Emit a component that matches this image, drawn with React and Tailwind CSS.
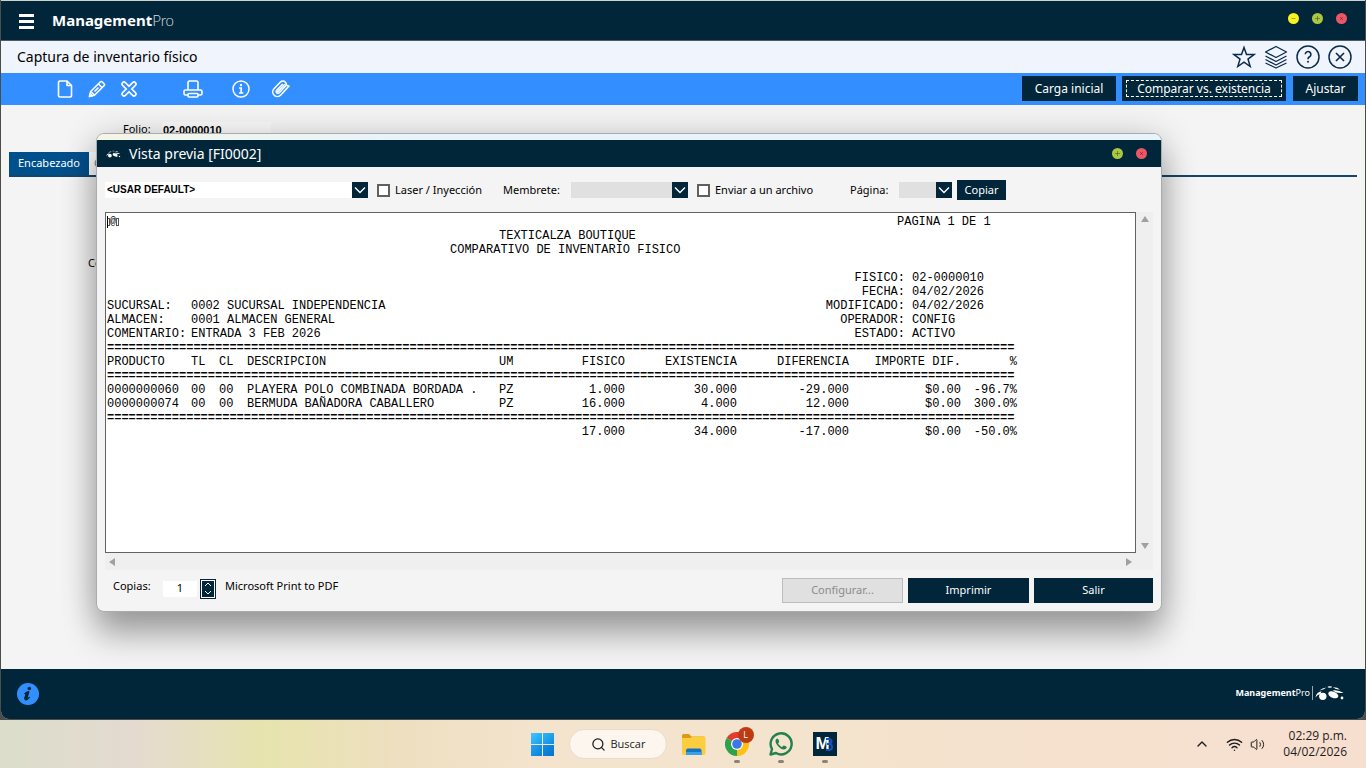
import React, { useState } from "react";
import { Search, Wifi, Volume2, ChevronUp } from "lucide-react";

const SEPARATOR = "=".repeat(126);

const COLUMNS = [
  { label: "PRODUCTO", className: "w-[84px] text-left" },
  { label: "TL", className: "w-7 text-left" },
  { label: "CL", className: "w-7 text-left" },
  { label: "DESCRIPCION", className: "w-[252px] text-left" },
  { label: "UM", className: "w-7 text-left" },
  { label: "FISICO", className: "w-[98px] text-right" },
  { label: "EXISTENCIA", className: "w-28 text-right" },
  { label: "DIFERENCIA", className: "w-28 text-right" },
  { label: "IMPORTE DIF.", className: "w-28 text-right" },
  { label: "%", className: "w-14 text-right" },
];

const ROWS = [
  ["0000000060", "00", "00", "PLAYERA POLO COMBINADA BORDADA .", "PZ", "1.000", "30.000", "-29.000", "$0.00", "-96.7%"],
  ["0000000074", "00", "00", "BERMUDA BAÑADORA CABALLERO", "PZ", "16.000", "4.000", "12.000", "$0.00", "300.0%"],
];

const TOTALS = ["", "", "", "", "", "17.000", "34.000", "-17.000", "$0.00", "-50.0%"];

const META = [
  ["", "", "FISICO:", "02-0000010"],
  ["", "", "FECHA:", "04/02/2026"],
  ["SUCURSAL:", "0002 SUCURSAL INDEPENDENCIA", "MODIFICADO:", "04/02/2026"],
  ["ALMACEN:", "0001 ALMACEN GENERAL", "OPERADOR:", "CONFIG"],
  ["COMENTARIO:", "ENTRADA 3 FEB 2026", "ESTADO:", "ACTIVO"],
];

function BrandMark({ className }) {
  return (
    <svg viewBox="0 0 30 14" className={className} fill="currentColor" aria-hidden="true">
      <path d="M0.500 11.500C1 8 3 6 6.500 5.300L5.500 8C3.500 8.300 2 9.500 0.500 11.500Z" />
      <path d="M4.500 4.500Q7 2 11.500 1.500Q9.500 3.500 4.500 4.500Z" />
      <ellipse cx="14.800" cy="1" rx="2.300" ry="0.700" />
      <path d="M18 1.200Q22 1 25 3.500Q21 3.800 18 1.200Z" />
      <path d="M17.500 4.500Q23 3.500 28.500 6.800Q22 8 17.500 4.500Z" />
      <ellipse cx="7.800" cy="10.300" rx="3.700" ry="3.600" />
      <ellipse cx="18.300" cy="8.800" rx="5.300" ry="3.100" transform="rotate(22 18.300 8.800)" />
      <circle cx="27" cy="12" r="1.400" />
    </svg>
  );
}

function WindowDot({ color, label, children }) {
  return (
    <button aria-label={label} className={`flex size-[11px] items-center justify-center rounded-full ${color}`}>
      <svg viewBox="0 0 11 11" className="size-[11px]" fill="none" stroke="#00000050" strokeWidth="1">
        {children}
      </svg>
    </button>
  );
}

function MaxDot() {
  return (
    <WindowDot color="bg-[#a9c740]" label="Maximizar">
      <path d="M3 5.500h5M5.500 3v5" />
    </WindowDot>
  );
}

function CloseDot() {
  return (
    <WindowDot color="bg-[#ee5565]" label="Cerrar">
      <path d="M4 4l3 3M7 4l-3 3" />
    </WindowDot>
  );
}

function Select({ id, label, className, options, disabled }) {
  return (
    <span className={`relative block h-4 ${className}`}>
      <select
        id={id}
        aria-label={label}
        disabled={disabled}
        className={`block h-4 w-full appearance-none pl-[2px] font-['Liberation_Sans'] text-[10px] leading-4 font-bold text-black ${
          disabled ? "bg-[#e0e0e0]" : "bg-white"
        }`}
      >
        {options.map((o) => (
          <option key={o}>{o}</option>
        ))}
      </select>
      <span className="pointer-events-none absolute inset-y-0 right-0 flex w-4 items-center justify-center bg-[#012639]">
        <svg viewBox="0 0 12 8" className="h-2 w-3" fill="none" stroke="white" strokeWidth="1.400">
          <path d="M1 1.500l5 5 5-5" />
        </svg>
      </span>
    </span>
  );
}

function Check({ label, className }) {
  return (
    <label className={`flex items-center gap-[5px] ${className}`}>
      <input type="checkbox" className="size-[13px] shrink-0 appearance-none border-2 border-[#606060] bg-white" />
      {label}
    </label>
  );
}

function Report() {
  return (
    <div className="min-h-[341px] flex-1 border border-[#636363] bg-white pt-[2px] pl-px font-['Liberation_Mono',monospace] text-[12px] leading-[14px] whitespace-pre text-black">
      <div className="flex h-[14px]">
        <span className="flex w-[790px] items-center text-[10px]">
          <i className="h-3 w-px bg-black" />
          <i className="h-2 w-[2px] border border-l-0 border-[#555]" />
          @
          <i className="h-2 w-[3px] border border-[#555]" />
        </span>
        <span>PAGINA 1 DE 1</span>
      </div>
      <div className="pl-[392px]">TEXTICALZA BOUTIQUE</div>
      <div className="pl-[343px]">COMPARATIVO DE INVENTARIO FISICO</div>
      <div className="h-[14px]" />
      {META.map(([label, value, rightLabel, rightValue]) => (
        <div key={rightLabel} className="flex">
          <span className="w-[84px]">{label}</span>
          <span className="w-[630px]">{value}</span>
          <span className="w-[84px] text-right">{rightLabel}</span>
          <span className="pl-[7px]">{rightValue}</span>
        </div>
      ))}
      <table className="w-[910px] table-fixed border-collapse">
        <colgroup>
          {COLUMNS.map((c) => (
            <col key={c.label} className={c.className} />
          ))}
        </colgroup>
        <thead>
          <tr>
            <td colSpan={10} className="p-0 font-bold">{SEPARATOR}</td>
          </tr>
          <tr>
            {COLUMNS.map((c) => (
              <th key={c.label} className={`p-0 font-normal ${c.className}`}>{c.label}</th>
            ))}
          </tr>
          <tr>
            <td colSpan={10} className="p-0 font-bold">{SEPARATOR}</td>
          </tr>
        </thead>
        <tbody>
          {ROWS.map((row) => (
            <tr key={row[0]}>
              {row.map((cell, i) => (
                <td key={i} className={`p-0 ${COLUMNS[i].className}`}>{cell}</td>
              ))}
            </tr>
          ))}
        </tbody>
        <tfoot>
          <tr>
            <td colSpan={10} className="p-0 font-bold">{SEPARATOR}</td>
          </tr>
          <tr>
            {TOTALS.map((cell, i) => (
              <td key={i} className={`p-0 ${COLUMNS[i].className}`}>{cell}</td>
            ))}
          </tr>
        </tfoot>
      </table>
    </div>
  );
}

function PreviewDialog() {
  const [copies, setCopies] = useState(1);

  return (
    <section
      role="dialog"
      aria-label="Vista previa"
      className="absolute top-7 right-[203px] left-[95px] overflow-hidden rounded-lg border border-[#a8acae] bg-[#f4f4f4] shadow-[0_24px_32px_rgba(0,0,0,0.28),0_4px_36px_rgba(0,0,0,0.2)]"
    >
      <div className="h-[6px] bg-linear-to-r from-[#f5f5e6] via-[#e8f4fb] via-30% to-[#e8f4fb]" />
      <header className="flex h-[27px] items-center bg-[#012639] pr-[14px] pl-[9px] text-white">
        <BrandMark className="h-2 w-[15px]" />
        <h2 className="ml-2 flex-1 pb-px text-[14px]">Vista previa [FI0002]</h2>
        <div className="flex gap-[13px]">
          <MaxDot />
          <CloseDot />
        </div>
      </header>

      <div className="flex h-[45px] items-center pt-px pl-2 text-[11px]">
        <Select label="Formato" className="w-[263px]" options={["<USAR DEFAULT>"]} />
        <Check label="Laser / Inyección" className="ml-[9px] w-[126px]" />
        <label htmlFor="membrete" className="w-[68px]">Membrete:</label>
        <Select id="membrete" className="w-[117px]" options={[""]} disabled />
        <Check label="Enviar a un archivo" className="ml-[9px] w-[153px]" />
        <label htmlFor="pagina" className="w-[49px]">Página:</label>
        <Select id="pagina" className="w-[53px]" options={[""]} disabled />
        <button className="ml-[5px] h-5 w-[49px] bg-[#012639] text-white">Copiar</button>
      </div>

      <div className="flex px-2">
        <Report />
        <div className="flex w-[17px] flex-col items-center justify-between bg-[#efefef] py-1">
          <svg viewBox="0 0 8 6" className="h-[6px] w-2 fill-[#a0a0a0]"><path d="M4 0l4 6H0z" /></svg>
          <svg viewBox="0 0 8 6" className="h-[6px] w-2 fill-[#a0a0a0]"><path d="M4 6L0 0h8z" /></svg>
        </div>
      </div>
      <div className="mx-2 flex h-[17px] items-center justify-between bg-[#efefef] pr-[21px] pl-1">
        <svg viewBox="0 0 6 8" className="h-2 w-[6px] fill-[#a0a0a0]"><path d="M0 4l6-4v8z" /></svg>
        <svg viewBox="0 0 6 8" className="h-2 w-[6px] fill-[#a0a0a0]"><path d="M6 4L0 8V0z" /></svg>
      </div>

      <footer className="flex h-[41px] items-center pr-2 pl-4 text-[11px]">
        <div className="flex flex-1 items-center pb-1">
          <label htmlFor="copias" className="w-[50px] pb-1">Copias:</label>
          <input
            id="copias"
            value={copies}
            onChange={(e) => setCopies(Number(e.target.value) || 1)}
            className="h-4 w-[34px] bg-white text-center"
          />
          <div className="ml-[3px] flex h-5 w-4 flex-col border border-[#012639] bg-white p-px">
            <button aria-label="Más copias" onClick={() => setCopies(copies + 1)} className="flex flex-1 items-center justify-center bg-[#012639]">
              <svg viewBox="0 0 8 5" className="h-[5px] w-2" fill="none" stroke="white"><path d="M1 4l3-3 3 3" /></svg>
            </button>
            <button aria-label="Menos copias" onClick={() => setCopies(Math.max(1, copies - 1))} className="flex flex-1 items-center justify-center bg-[#012639]">
              <svg viewBox="0 0 8 5" className="h-[5px] w-2" fill="none" stroke="white"><path d="M1 1l3 3 3-3" /></svg>
            </button>
          </div>
          <span className="ml-[9px] pb-1">Microsoft Print to PDF</span>
        </div>
        <div className="flex gap-[5px]">
          <button disabled className="h-[25px] w-[121px] border border-[#bdbdbd] bg-[#e0e0e0] text-[#8b8b8b]">Configurar...</button>
          <button className="h-[25px] w-[121px] bg-[#012639] text-white">Imprimir</button>
          <button className="h-[25px] w-[119px] bg-[#012639] text-white">Salir</button>
        </div>
      </footer>
    </section>
  );
}

function Toolbar() {
  return (
    <div className="flex h-8 items-center bg-[#338fff] pr-[7px] pb-px pl-[55px] text-white">
      <button aria-label="Nuevo">
        <svg viewBox="0 0 18 18" className="size-[18px]" fill="none" stroke="currentColor" strokeWidth="1.600" strokeLinejoin="round">
          <path d="M4 1h7l4.500 4.500v10a1.500 1.500 0 0 1-1.500 1.500h-10a1.500 1.500 0 0 1-1.500-1.500v-13a1.500 1.500 0 0 1 1.500-1.500z" />
          <path d="M11 1v4.500h4.500" />
        </svg>
      </button>
      <button aria-label="Editar" className="ml-[14px]">
        <svg viewBox="0 0 18 18" className="size-[18px]" fill="none" stroke="currentColor" strokeWidth="1.600" strokeLinejoin="round">
          <path d="M1.500 16.500l1.200-5L12.200 2a1.500 1.500 0 0 1 2.100 0l1.700 1.700a1.500 1.500 0 0 1 0 2.100L6.500 15.300z" />
          <path d="M10.500 4l3.500 3.500M2.700 11.500l3.800 3.800M6.500 11.500l4-4" />
          <path d="M1.500 16.500l.7-2.800 2.100 2.100z" fill="currentColor" />
        </svg>
      </button>
      <button aria-label="Eliminar" className="ml-[14px]">
        <svg viewBox="0 0 18 18" className="size-[18px]" fill="none" strokeLinecap="round">
          <path d="M4 4l10 10M14 4L4 14" stroke="white" strokeWidth="5.500" />
          <path d="M4 4l10 10M14 4L4 14" stroke="#338fff" strokeWidth="2.400" />
        </svg>
      </button>
      <button aria-label="Imprimir" className="ml-[45px]">
        <svg viewBox="0 0 20 18" className="h-[18px] w-5" fill="none" stroke="currentColor" strokeWidth="1.600" strokeLinejoin="round">
          <path d="M5 10V2.500a1.500 1.500 0 0 1 1.500-1.500h7a1.500 1.500 0 0 1 1.500 1.500V10" />
          <path d="M5 15H2.500a1.500 1.500 0 0 1-1.500-1.500V11.500a1.500 1.500 0 0 1 1.500-1.500h15a1.500 1.500 0 0 1 1.500 1.500v2a1.500 1.500 0 0 1-1.500 1.500H15" />
          <rect x="5" y="13.500" width="10" height="3.500" rx="1" />
        </svg>
      </button>
      <button aria-label="Información" className="ml-[29px]">
        <svg viewBox="0 0 18 18" className="size-[18px]" fill="none" stroke="currentColor" strokeWidth="1.500">
          <circle cx="9" cy="9" r="8" />
          <path d="M7 8h2.200v5M7 13h4.300" strokeWidth="1.700" />
          <circle cx="9" cy="5" r="1.200" fill="currentColor" stroke="none" />
        </svg>
      </button>
      <button aria-label="Adjuntar" className="ml-[22px]">
        <svg viewBox="0 0 18 18" className="size-[18px]" fill="none" stroke="currentColor" strokeWidth="1.600" strokeLinecap="round" strokeLinejoin="round">
          <path d="M16.800 6.300L8.800 15a4.600 4.600 0 0 1-6.800-6.200L8.500 2a3.200 3.200 0 0 1 4.700 0c1.200 1.200 1.200 3 .1 4.300L7.300 12.700a1.700 1.700 0 0 1-2.600-2.300L10.300 4.500" />
          <path d="M16.800 6.300l-1.700-.8M5.800 11.700l6.500-7" />
        </svg>
      </button>
      <div className="ml-auto flex text-[12px]">
        <button className="h-[25px] w-[94px] bg-[#012639]">Carga inicial</button>
        <button className="ml-[6px] h-[25px] w-[164px] bg-[#012639] p-1">
          <span className="flex h-full items-center justify-center border border-dashed border-white">Comparar vs. existencia</span>
        </button>
        <button className="ml-[7px] h-[25px] w-[65px] bg-[#012639]">Ajustar</button>
      </div>
    </div>
  );
}

function Taskbar() {
  return (
    <nav className="grid h-12 grid-cols-[1fr_auto_1fr] items-center bg-[#f4e3cd] font-['Open_Sans',sans-serif] text-[#1c1c1c]">
      <div className="flex h-full">
        <div className="h-full flex-1 bg-linear-to-r from-[#dcdecb] to-[#e4dad0]" />
        <div className="h-full flex-1 bg-linear-to-r from-[#e4dad0] to-[#e7e4ae]" />
        <div className="h-full flex-2 bg-linear-to-r from-[#e7e4ae] via-[#eedfc0] to-[#f4e3cd]" />
      </div>
      <div className="flex items-center pl-px">
        <button aria-label="Inicio" className="grid size-[23px] grid-cols-2 gap-px">
          <span className="bg-linear-to-br from-[#3fc8fb] to-[#179cec]" />
          <span className="bg-linear-to-br from-[#2eb6f5] to-[#0f8be2]" />
          <span className="bg-linear-to-br from-[#1fa4ee] to-[#0b80da]" />
          <span className="bg-linear-to-br from-[#1390e4] to-[#0670ce]" />
        </button>
        <button className="ml-[15px] flex h-[30px] w-[98px] items-center gap-[5px] rounded-full border border-[#eadccb] bg-[#fcf6ef] pl-[21px] text-[11px]">
          <Search size={15} strokeWidth={2} />
          Buscar
        </button>
        <button aria-label="Explorador de archivos" className="ml-[14px]">
          <svg viewBox="0 0 25 23" className="h-[23px] w-[25px]">
            <path d="M1 2.500Q1 1 2.500 1H8l2.500 2.500H22.500Q24 3.500 24 5V12H1z" fill="#dc9c12" />
            <path d="M1 5H9.500L11.500 3.500H23Q24.500 3.500 24.500 5V20Q24.500 22 22.500 22H2.500Q1 22 1 20z" fill="#fbcd3f" />
            <path d="M5 22v-4.500q0-2 2-2h11.500q2 0 2 2V22z" fill="#1573c5" />
            <path d="M5 19h15.500v3H5z" fill="#3aa0e8" />
          </svg>
        </button>
        <button aria-label="Chrome" className="relative ml-[19px]">
          <svg viewBox="0 0 24 24" className="size-6">
            <path d="M12 12L1.600 6A12 12 0 0 1 22.400 6z" fill="#e33b2e" />
            <path d="M12 12L22.400 6A12 12 0 0 1 12 24z" fill="#fbc116" />
            <path d="M12 12v12A12 12 0 0 1 1.600 6z" fill="#2da24c" />
            <circle cx="12" cy="12" r="6" fill="white" />
            <circle cx="12" cy="12" r="4.800" fill="#3b78e7" />
          </svg>
          <span className="absolute -top-[5px] -right-[5px] flex size-4 items-center justify-center rounded-full bg-[#bd3a12] text-[9px] text-white">L</span>
          <span className="absolute -bottom-[7px] left-[9px] h-[3px] w-[6px] rounded-full bg-[#8a8378]" />
        </button>
        <button aria-label="WhatsApp" className="relative ml-5">
          <svg viewBox="0 0 24 24" className="size-6" fill="none">
            <path d="M1.500 22.500L3 17A10.500 10.500 0 1 1 7 21z" stroke="#24804f" strokeWidth="2.400" strokeLinejoin="round" />
            <path d="M8.300 6.500c-.6 0-1.800 1-1.800 2.700 0 3 5 8.300 8.300 8.300 1.700 0 3-1.300 2.900-2.500-.1-.5-2.500-1.700-3-1.600-.5.1-1.100 1.500-1.600 1.500-.7 0-3.700-2.600-3.900-3.500 0-.5 1-1.200 1-1.700 0-.6-1-3.200-1.900-3.200z" fill="#24804f" />
          </svg>
          <span className="absolute -bottom-[7px] left-[9px] h-[3px] w-[6px] rounded-full bg-[#8a8378]" />
        </button>
        <button aria-label="ManagementPro" className="relative ml-5 flex size-6 items-center bg-[#012639] pl-[3px] font-['Liberation_Sans'] text-[17px] leading-6 font-bold text-white">
          M
          <svg viewBox="0 0 8 14" className="absolute right-1 h-[14px] w-2" fill="none" stroke="#1550c8" strokeWidth="2">
            <path d="M1 2h3a2.500 2.500 0 0 1 0 5H2M4 7a3 3 0 0 1 0 6H1M4 7l3-4" />
          </svg>
          <span className="absolute -bottom-[7px] left-[9px] h-[3px] w-[6px] rounded-full bg-[#8a8378]" />
        </button>
      </div>
      <div className="flex h-full items-center justify-end bg-linear-to-r from-[#f4e3cd] to-[#f7dfd0] pr-[19px]">
        <button aria-label="Mostrar iconos ocultos"><ChevronUp size={16} /></button>
        <button aria-label="Red" className="ml-4"><Wifi size={17} strokeWidth={2} /></button>
        <button aria-label="Volumen" className="ml-[7px]"><Volume2 size={15} strokeWidth={1.6} /></button>
        <div className="ml-[18px] text-right text-[12px] leading-4">
          <div>02:29 p.m.</div>
          <div>04/02/2026</div>
        </div>
      </div>
    </nav>
  );
}

export default function App() {
  return (
    <div className="flex min-h-screen flex-col bg-[#4a4d4a] font-['Noto_Sans',sans-serif] text-black">
      <div className="relative mx-px mb-px flex flex-1 flex-col overflow-hidden rounded-b-lg border-t border-[#cdd3cf] bg-[#f4f4f4]">
        <header className="flex h-10 items-center border-b border-[#4b5c66] bg-[#012639] pr-[18px] pl-[18px] text-white">
          <button aria-label="Menú" className="flex w-[15px] flex-col gap-[3px] pt-[2px]">
            <span className="h-[3px] bg-white" />
            <span className="h-[3px] bg-white" />
            <span className="h-[3px] bg-white" />
          </button>
          <h1 className="ml-[18px] flex-1 text-[15px] font-bold">
            Management<span className="font-['Lato'] font-light text-[#d5dde2]">Pro</span>
          </h1>
          <div className="flex gap-[13px] pb-1">
            <WindowDot color="bg-[#f8f320]" label="Minimizar">
              <path d="M3.500 5.500h4" />
            </WindowDot>
            <MaxDot />
            <CloseDot />
          </div>
        </header>

        <div className="flex h-8 items-center bg-[#f0f4fc] pr-[13px] pl-4 text-[#0c2c4c]">
          <h2 className="flex-1 pb-px text-[14px] text-black">Captura de inventario físico</h2>
          <div className="flex items-center gap-2">
            <button aria-label="Favorito">
              <svg viewBox="0 0 24 24" className="size-6" fill="none" stroke="currentColor" strokeWidth="1.500" strokeLinejoin="miter">
                <path d="M12 2.500l2.500 7h7.500l-6 4.600 2.200 7.400L12 17.200l-6.200 4.300L8 14.100 2 9.500h7.500z" />
              </svg>
            </button>
            <button aria-label="Capas">
              <svg viewBox="0 0 24 24" className="size-6" fill="none" stroke="currentColor" strokeWidth="1.300" strokeLinejoin="round">
                <path d="M12 1.500l10.500 5.500L12 12.500 1.500 7z" />
                <path d="M1.500 11L12 16.500 22.500 11M1.500 14.500L12 20l10.500-5.500M1.500 18L12 23l10.500-5" />
              </svg>
            </button>
            <button aria-label="Ayuda">
              <svg viewBox="0 0 24 24" className="size-6" fill="none" stroke="currentColor" strokeWidth="1.500">
                <circle cx="12" cy="12" r="11" />
                <path d="M9.300 9.300a2.800 2.800 0 1 1 4.200 2.500c-1 .6-1.500 1-1.500 2.400" strokeWidth="1.600" />
                <circle cx="12" cy="16.800" r="1" fill="currentColor" stroke="none" />
              </svg>
            </button>
            <button aria-label="Cerrar ventana">
              <svg viewBox="0 0 24 24" className="size-6" fill="none" stroke="currentColor" strokeWidth="1.500">
                <circle cx="12" cy="12" r="11" />
                <path d="M8 8l8 8M16 8l-8 8" strokeWidth="1.700" />
              </svg>
            </button>
          </div>
        </div>

        <Toolbar />

        <main className="relative flex-1 pt-[15px] text-[11px]">
          <div className="flex items-center pl-[122px]">
            <label htmlFor="folio" className="w-[39px]">Folio:</label>
            <input id="folio" readOnly value="02-0000010" className="mt-[2px] h-4 w-[109px] bg-[#f9f9f9] pl-px font-['Liberation_Sans'] text-[11px] font-bold" />
          </div>
          <div className="mx-2 mt-[14px] flex border-b-2 border-[#17466b]">
            <button className="h-[23px] w-20 bg-[#00508c] text-white">Encabezado</button>
            <button className="h-[23px] bg-white pl-[5px] text-[#5a7fa0]">C</button>
          </div>
          <div className="pt-[78px] pl-[87px]">Co</div>
          <PreviewDialog />
        </main>

        <footer className="relative flex h-[50px] items-center justify-between bg-[#012639] pr-5 pl-4 text-white">
          <svg viewBox="0 0 22 22" className="size-[22px]">
            <circle cx="11" cy="11" r="11" fill="#338fff" />
            <circle cx="12.300" cy="5.500" r="1.800" fill="#012639" />
            <path d="M7.500 10.500c2-1.500 3-2 4.500-2l-2 7c1 0 1.500-.7 2.500-1.300-1 2-2.200 2.800-3.500 2.800-1.200 0-1.700-.8-1.300-2l1.300-4.500z" fill="#012639" stroke="#012639" />
          </svg>
          <div className="flex items-center pb-[2px] text-[9px]">
            <b>Management</b>Pro
            <span className="mx-[2px] h-[14px] w-px bg-[#9aa7af]" />
            <BrandMark className="h-[14px] w-[30px]" />
          </div>
        </footer>
      </div>
      <Taskbar />
    </div>
  );
}
